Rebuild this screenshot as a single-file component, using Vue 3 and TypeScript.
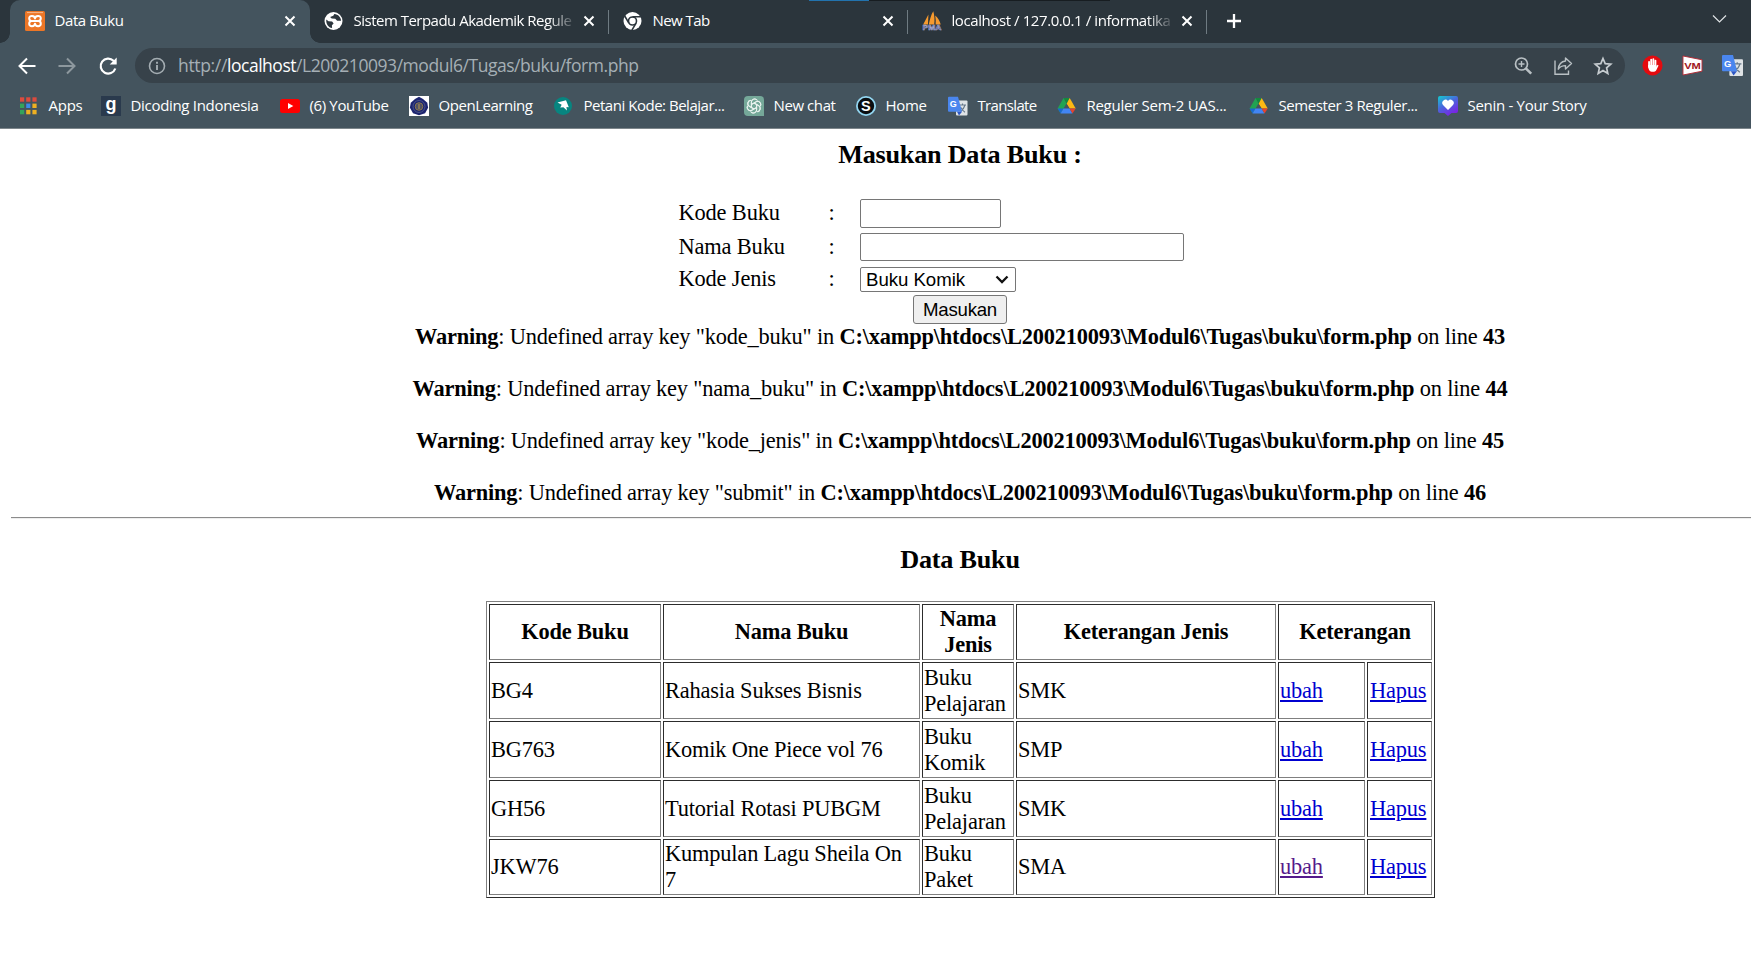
<script setup lang="ts">
import type { Directive } from 'vue'

interface Tab { icon: string; title: string; width: number; active?: boolean; fade?: boolean }
interface Bookmark { icon: string; label: string; width: number }
interface Warning { key: string; line: number; width: number }
interface Book { code: string; name: string; kind: string; level: string; visited?: boolean }

// Tracks a run of text so that it fills the given width in pixels.
const vFit: Directive<HTMLElement, number> = {
  mounted(el, { value }) {
    const natural = el.getBoundingClientRect().width
    const count = (el.textContent ?? '').trim().length
    if (value && count) el.style.letterSpacing = `${(value - natural) / count}px`
  },
}

const tabs: Tab[] = [
  { icon: 'xampp', title: 'Data Buku', width: 69, active: true },
  { icon: 'globe', title: 'Sistem Terpadu Akademik Regule', width: 218, fade: true },
  { icon: 'chrome', title: 'New Tab', width: 57 },
  { icon: 'pma', title: 'localhost / 127.0.0.1 / informatika', width: 219, fade: true },
]

const bookmarks: Bookmark[] = [
  { icon: 'apps', label: 'Apps', width: 34 },
  { icon: 'dicoding', label: 'Dicoding Indonesia', width: 128 },
  { icon: 'youtube', label: '(6) YouTube', width: 79 },
  { icon: 'emblem', label: 'OpenLearning', width: 94 },
  { icon: 'petani', label: 'Petani Kode: Belajar...', width: 141 },
  { icon: 'chat', label: 'New chat', width: 62 },
  { icon: 'home', label: 'Home', width: 41 },
  { icon: 'translate', label: 'Translate', width: 59 },
  { icon: 'drive', label: 'Reguler Sem-2 UAS...', width: 140 },
  { icon: 'drive', label: 'Semester 3 Reguler...', width: 139 },
  { icon: 'heart', label: 'Senin - Your Story', width: 119 },
]

const warnings: Warning[] = [
  { key: 'kode_buku', line: 43, width: 1090 },
  { key: 'nama_buku', line: 44, width: 1095 },
  { key: 'kode_jenis', line: 45, width: 1088 },
  { key: 'submit', line: 46, width: 1052 },
]

const books: Book[] = [
  { code: 'BG4', name: 'Rahasia Sukses Bisnis', kind: 'Buku Pelajaran', level: 'SMK' },
  { code: 'BG763', name: 'Komik One Piece vol 76', kind: 'Buku Komik', level: 'SMP' },
  { code: 'GH56', name: 'Tutorial Rotasi PUBGM', kind: 'Buku Pelajaran', level: 'SMK' },
  { code: 'JKW76', name: 'Kumpulan Lagu Sheila On 7', kind: 'Buku Paket', level: 'SMA', visited: true },
]

const appColors = ['#dc4b3e', '#dc4b3e', '#dc4b3e', '#35a35a', '#3b8bea', '#eeb022', '#35a35a', '#eeb022', '#eeb022']
</script>

<template>
  <div class="window">
    <header class="browser">
      <div class="tabstrip">
        <div class="edge"></div>
        <div v-for="t in tabs" :key="t.title" class="tab" :class="{ active: t.active, fade: t.fade }">
          <svg class="fav" viewBox="0 0 20 20">
            <g v-if="t.icon === 'xampp'">
              <rect width="20" height="20" rx="1.5" fill="#ed7626" />
              <path d="M2 1.6h16" stroke="#f7b98d" stroke-width="1" />
              <path d="M7.600 10h4.800M10 7.400C9.600 3.900 4 4.200 4.200 7.400 4.300 9.200 5.500 10 6.600 10 5.500 10 4.200 10.800 4.200 12.700 4 16 9.600 16.200 10 12.700M10 7.400C10.400 3.900 16 4.200 15.800 7.400 15.700 9.200 14.500 10 13.400 10 14.500 10 15.800 10.800 15.800 12.700 16 16 10.400 16.200 10 12.700" fill="none" stroke="#fff" stroke-width="2" stroke-linecap="round" stroke-linejoin="round" />
            </g>
            <g v-else-if="t.icon === 'globe'">
              <circle cx="9.5" cy="10" r="9" fill="#fff" />
              <path d="M2.3 8.5l2.2 1.7 3.6.2 1.5 2.2-1.7 1.7.2 2.8c-3.7-.6-6.3-4-5.8-8.6zM10.3 3l-1 1.7-3.2 1.2 1.6 1.6 3.6.2 1.8 2h4c-.2-3.5-2.8-6.3-6.8-6.7z" fill="#2c363d" />
            </g>
            <g v-else-if="t.icon === 'chrome'">
              <circle cx="9.5" cy="10" r="9" fill="#fff" />
              <circle cx="9.5" cy="10" r="4" fill="none" stroke="#2c363d" stroke-width="1.6" />
              <path d="M9.5 5.8h8.3M5.9 12.1L1.7 5M13.1 12.1l-4.2 7" stroke="#2c363d" stroke-width="1.6" />
            </g>
            <g v-else>
              <path d="M1.200 13.500L6.400 3.500 6 13.500zM6.800 13.500C8 8 9 4 11.300.3 12.600 5 12.800 9 12.200 13.500zM13.600 13.500c.3-3 .2-6-.4-9 2.500 2 4.800 5.500 5.500 9z" fill="#f79a2e" />
              <text x=".5" y="19.200" class="pma" textLength="19" lengthAdjust="spacingAndGlyphs">PMA</text>
            </g>
          </svg>
          <div class="title"><span v-fit="t.width">{{ t.title }}</span></div>
          <svg class="close" viewBox="0 0 12 12"><path d="M1.500 1.500l9 9M10.500 1.500l-9 9" stroke="#fff" stroke-width="2" /></svg>
        </div>
        <svg class="plus" viewBox="0 0 16 16"><path d="M8 1v14M1 8h14" stroke="#fff" stroke-width="2.300" /></svg>
        <svg class="chevron" viewBox="0 0 15 10"><path d="M1 1.500l6.500 6.500L14 1.500" fill="none" stroke="#dfe3e5" stroke-width="1.200" /></svg>
        <div class="progress"></div>
      </div>

      <div class="toolbar">
        <svg class="nav" viewBox="0 0 20 20"><path d="M18.500 10H3M10 2.500L2.500 10l7.500 7.500" fill="none" stroke="#fff" stroke-width="2" /></svg>
        <svg class="nav" viewBox="0 0 20 20"><path d="M1.500 10H17M10 2.500l7.500 7.500-7.500 7.500" fill="none" stroke="#8d989e" stroke-width="2" /></svg>
        <svg class="nav" viewBox="0 0 20 20">
          <path d="M17.300 12.500A7.500 7.500 0 1 1 15.500 4.800l2 2.200" fill="none" stroke="#fff" stroke-width="2.200" />
          <path d="M18.700 1.500v7h-7z" fill="#fff" />
        </svg>
        <div class="address">
          <svg class="info" viewBox="0 0 18 18">
            <circle cx="9" cy="9" r="7.500" fill="none" stroke="#a4adb2" stroke-width="1.600" />
            <path d="M9 8v5M9 4.800v1.900" stroke="#a4adb2" stroke-width="1.900" />
          </svg>
          <div class="url"><span v-fit="49">http://</span><span v-fit="69" class="host">localhost</span><span v-fit="342.5">/L200210093/modul6/Tugas/buku/form.php</span></div>
          <svg class="action" viewBox="0 0 20 20">
            <circle cx="8.500" cy="8" r="6" fill="none" stroke="#b9c0c4" stroke-width="1.700" />
            <path d="M8.500 5v6M5.500 8h6" stroke="#b9c0c4" stroke-width="1.400" />
            <path d="M12.800 12.300l5.400 5.400" stroke="#b9c0c4" stroke-width="2.600" />
          </svg>
          <svg class="action" viewBox="0 0 20 20">
            <path d="M2 4.500V18.300H15.500V14.500" fill="none" stroke="#b9c0c4" stroke-width="1.400" />
            <path d="M12.500 2l6 5.500-6 5.500v-3.400c-3.200 0-5.500 1-7.200 3.600.4-4.500 3-7.700 7.200-8.200z" fill="none" stroke="#b9c0c4" stroke-width="1.400" stroke-linejoin="round" />
          </svg>
          <svg class="action" viewBox="0 0 20 20">
            <path d="M10 2.500l2.200 5.200 5.600.5-4.200 3.700 1.200 5.500-4.800-2.900-4.800 2.900 1.200-5.500-4.200-3.700 5.600-.5z" fill="none" stroke="#c6ccd0" stroke-width="1.700" />
          </svg>
        </div>
        <svg class="ext" viewBox="0 0 22 22">
          <circle cx="11" cy="11" r="10.500" fill="#e40b0f" />
          <path d="M7.400 12.500V7.200M9.600 11V4.800M11.900 11V4.300M14.100 11.500V5.800" stroke="#fff" stroke-width="1.900" stroke-linecap="round" />
          <path d="M6.450 10.500h8.600v1.700l1.200-2 1.100.8-2.300 4.600c-.8 1.500-2 2-3.700 2-3.300 0-4.900-2.200-4.900-6.600z" fill="#fff" />
        </svg>
        <svg class="ext" viewBox="0 0 22 22">
          <path d="M1 1l20 4v12L1 21z" fill="#fff" stroke="#b32a34" stroke-width="1" />
          <text x="2.300" y="14.800" class="vm" textLength="17.500" lengthAdjust="spacingAndGlyphs">VM</text>
        </svg>
        <svg class="ext" viewBox="0 0 20 20">
          <rect x="7" y="4" width="13" height="16" rx="1" fill="#dfe3e6" />
          <path d="M10.500 8.500h8M14.500 7v1.500M17 8.500c-.8 3.500-3 5.500-5 6.800M12 10.500c1 2.500 3 4.500 5 6" fill="none" stroke="#66788a" stroke-width="1.200" />
          <path d="M1 0h9.500l3.800 15.500H1a1 1 0 0 1-1-1V1a1 1 0 0 1 1-1z" fill="#4a86ee" />
          <path d="M8.500 15.500h5.800L11 19.500z" fill="#2c56c4" />
          <text x="2" y="11" class="gee">G</text>
        </svg>
      </div>

      <nav class="bookmarks">
        <div v-for="b in bookmarks" :key="b.label" class="bookmark">
          <svg class="bicon" viewBox="0 0 20 20">
            <g v-if="b.icon === 'apps'">
              <rect v-for="(c, i) in appColors" :key="i" :x="1 + (i % 3) * 6.200" :y="1.300 + Math.floor(i / 3) * 6.300" width="4.200" height="4.400" :fill="c" />
            </g>
            <g v-else-if="b.icon === 'dicoding'">
              <rect width="20" height="20" fill="#2a3a4d" />
              <text x="4.500" y="14.200" class="nine">g</text>
            </g>
            <g v-else-if="b.icon === 'youtube'">
              <rect y="3" width="20" height="14" rx="2.500" fill="#f00" />
              <path d="M8 7l5.300 3L8 13z" fill="#fff" />
            </g>
            <g v-else-if="b.icon === 'emblem'">
              <rect width="20" height="20" fill="#fff" />
              <path d="M10 .8l4 2.200 4.300 3.800.8 5-3 5.400-6.100 2-6-2-3.100-5.400.9-5L6 3z" fill="#1c2470" />
              <circle cx="10" cy="10.500" r="6" fill="none" stroke="#4a5488" stroke-width="1" />
              <circle cx="10" cy="10.500" r="3.800" fill="#4e5065" stroke="#8a774e" stroke-width="1" />
              <path d="M10 8v5" stroke="#a58c52" stroke-width="1.200" />
            </g>
            <g v-else-if="b.icon === 'petani'">
              <circle cx="9" cy="10" r="9" fill="#078580" />
              <path d="M3.500 6.500L12 4.300l2.800 7-2.400-.4.600 3.500-3.600-3.200-3.200.2 1.500-2.600z" fill="#fff" />
            </g>
            <g v-else-if="b.icon === 'chat'">
              <path d="M4 0h12a4 4 0 0 1 4 4v16H4a4 4 0 0 1-4-4V4a4 4 0 0 1 4-4z" fill="#75a899" />
              <g fill="none" stroke="#eaf3f0" stroke-width="1">
                <path v-for="a in 6" :key="a" d="M7.400 11.500V6.200c0-3.400 4.400-4.400 6-1.700M7.400 8.500l4.600-2.700c2.900-1.600 5.700 1.500 4.500 4.100" :transform="`rotate(${a * 60} 10 10)`" />
              </g>
            </g>
            <g v-else-if="b.icon === 'home'">
              <circle cx="10" cy="10" r="9.100" fill="#0a0d10" stroke="#92d5f0" stroke-width="1.800" />
              <text x="5" y="15.200" class="ess">S</text>
            </g>
            <g v-else-if="b.icon === 'translate'">
              <rect x="8" y="4.500" width="11.500" height="15" rx="1" fill="#dfe3e6" />
              <path d="M11 9h7M14.500 7.500V9M17 9c-.8 3.200-2.500 5-4.500 6.200M12.500 11c1 2 2.500 4 4.500 5.300" fill="none" stroke="#66788a" stroke-width="1.100" />
              <path d="M1 .8h9l4 15H1a1 1 0 0 1-1-1v-13a1 1 0 0 1 1-1z" fill="#4a86ee" />
              <path d="M9 15.800h5L11 19.500z" fill="#2c56c4" />
              <text x="1.800" y="11.200" class="gee">G</text>
            </g>
            <g v-else-if="b.icon === 'drive'">
              <path d="M6.500 2h6.200L9.600 7.800z" fill="#128a3d" />
              <path d="M12.700 2l6 10.400h-6.100L9.600 7.800z" fill="#fdb913" />
              <path d="M9.600 7.800L3.600 17.500.6 12.400 6.500 2z" fill="#21a352" />
              <path d="M9.600 7.800l3 4.600H6.500z" fill="#44545e" />
              <path d="M.6 12.400h5.900l-2.900 5.100z" fill="#1967d2" />
              <path d="M6.500 12.400h6.100l2.900 5.100H3.600z" fill="#4285f4" />
              <path d="M12.600 12.400h6.100l-3.200 5.100z" fill="#e5432f" />
            </g>
            <g v-else>
              <defs>
                <linearGradient id="story" x1="0" y1="0" x2=".6" y2="1">
                  <stop offset="0" stop-color="#12cdd0" />
                  <stop offset=".5" stop-color="#4a66dc" />
                  <stop offset="1" stop-color="#7a22e4" />
                </linearGradient>
              </defs>
              <path d="M2 0h16a2 2 0 0 1 2 2v13a2 2 0 0 1-2 2h-4.500L10 20l-3.500-3H2a2 2 0 0 1-2-2V2a2 2 0 0 1 2-2z" fill="url(#story)" />
              <path d="M10 14L5 9a3 3 0 0 1 5-4 3 3 0 0 1 5 4z" fill="#fff" />
            </g>
          </svg>
          <span v-fit="b.width">{{ b.label }}</span>
        </div>
      </nav>
    </header>

    <main class="page">
      <h3><span v-fit="243.5">Masukan Data Buku :</span></h3>
      <form class="form" @submit.prevent>
        <div class="row first"><label>Kode Buku</label><span>:</span><input class="short" type="text"></div>
        <div class="row"><label>Nama Buku</label><span>:</span><input class="long" type="text"></div>
        <div class="row last">
          <label>Kode Jenis</label><span>:</span>
          <div class="select">
            <span v-fit="97.5">Buku Komik</span>
            <svg viewBox="0 0 14 9"><path d="M1.500 1.500L7 7l5.500-5.500" fill="none" stroke="#111" stroke-width="2.300" /></svg>
          </div>
        </div>
        <button type="submit"><span v-fit="74">Masukan</span></button>
      </form>

      <div class="warnings">
        <p v-for="w in warnings" :key="w.key">
          <span v-fit="w.width"><b>Warning</b>: Undefined array key "{{ w.key }}" in <b>C:\xampp\htdocs\L200210093\Modul6\Tugas\buku\form.php</b> on line <b>{{ w.line }}</b></span>
        </p>
      </div>
      <hr>

      <h3 class="second"><span v-fit="119.5">Data Buku</span></h3>
      <table>
        <colgroup>
          <col class="c1"><col class="c2"><col class="c3"><col class="c4"><col class="c5"><col class="c6">
        </colgroup>
        <tbody>
          <tr>
            <th>Kode Buku</th><th>Nama Buku</th><th>Nama Jenis</th><th>Keterangan Jenis</th><th colspan="2">Keterangan</th>
          </tr>
          <tr v-for="b in books" :key="b.code">
            <td>{{ b.code }}</td><td>{{ b.name }}</td><td>{{ b.kind }}</td><td>{{ b.level }}</td>
            <td><a href="#" :class="{ visited: b.visited }">ubah</a></td>
            <td class="del"><a href="#">Hapus</a></td>
          </tr>
        </tbody>
      </table>
    </main>
  </div>
</template>

<style>
html, body { margin: 0; background: #fff; overflow: hidden; }
</style>

<style scoped>
.window { width: 1751px; height: 967px; overflow: hidden; background: #fff; }
.browser { height: 129px; box-sizing: border-box; background: #44545e; border-bottom: 1px solid #7d868b; color: #fff; font: 15px/20px "Open Sans", "Noto Sans", sans-serif; overflow: hidden; }
.browser span { display: inline-block; white-space: pre; }
svg { display: block; flex: none; }
svg text { font-family: "Liberation Sans", sans-serif; font-weight: bold; }

.tabstrip { position: relative; display: flex; height: 43px; background: #2b353c; }
.edge { width: 10px; background: radial-gradient(circle at 0 0, transparent 9.500px, #44545e 10px) left bottom / 10px 10px no-repeat; }
.tab { position: relative; display: flex; align-items: center; width: 299px; height: 42px; box-sizing: border-box; padding-left: 14.500px; }
.tab.active { width: 299.500px; height: 43px; padding-left: 15px; padding-bottom: 1px; background: #44545e; border-radius: 10px 10px 0 0; }
.tab.active::before { content: ""; position: absolute; right: -10px; bottom: 0; width: 10px; height: 10px; background: radial-gradient(circle at 100% 0, transparent 9.500px, #44545e 10px); }
.tab:not(.active)::after { content: ""; position: absolute; right: 0; top: 10px; width: 1px; height: 24px; background: #6f7b82; }
.fav { width: 20px; height: 20px; }
.title { flex: 1; margin-left: 9.500px; overflow: hidden; height: 22px; line-height: 20px; }
.title span { vertical-align: top; }
.fade .title { -webkit-mask-image: linear-gradient(90deg, #000 88%, transparent 101%); mask-image: linear-gradient(90deg, #000 88%, transparent 101%); }
.fade .title { margin-right: -2px; }
.close { width: 12px; height: 12px; margin: 0 14px 0 10px; }
.plus { width: 16px; height: 16px; margin: 13px 0 0 19px; }
.chevron { width: 15px; height: 10px; margin: 14px 24px 0 auto; }
.progress { position: absolute; left: 809px; top: 0; width: 301px; height: 1px; background: linear-gradient(90deg, #2273ae 60px, #171d21 60px); }

.toolbar { display: flex; align-items: center; height: 45px; }
.nav { width: 20px; height: 20px; margin: 0 3px 0 17px; }
.nav + .nav { margin-left: 17px; }
.nav:nth-child(3) { margin: 0 17px 0 18px; }
.address { display: flex; align-items: center; width: 1490px; height: 35px; box-sizing: border-box; border-radius: 18px; background: #37424a; padding: 0 12.500px 0 13px; flex: none; }
.info { width: 18px; height: 18px; }
.url { flex: 1; margin-left: 12px; font-size: 17.500px; line-height: 22px; height: 24px; color: #a5afb5; white-space: nowrap; }
.host { color: #fff; }
.action { width: 20px; height: 20px; margin-left: 20px; }
.ext { width: 21px; height: 21px; margin-left: 19px; }
.address + .ext { margin-left: 17px; }
.vm { font-size: 9px; fill: #a01722; }
.gee { font-size: 9px; fill: #fff; }
.nine { font-size: 18px; fill: #fff; }
.ess { font-size: 14.500px; fill: #fff; }
.pma { font-size: 8px; fill: #3d4080; stroke: #b9bbdc; stroke-width: .5px; }

.bookmarks { display: grid; grid-template-columns: 82px 179px 129px 145px 190px 112px 92px 109px 192px 189px 170px; padding-left: 19px; height: 36px; align-items: center; }
.bookmark { display: flex; align-items: center; gap: 9.500px; }
.bookmark span { height: 22px; line-height: 20px; }
.bicon { width: 20px; height: 20px; }

.page { width: 1898px; margin-left: 11px; font: 22.400px/26px "Liberation Serif", serif; color: #000; }
h3 { margin: 0; padding-top: 11px; height: 30px; font-size: 26.200px; line-height: 30px; text-align: center; }
h3 span, .warnings span { display: inline-block; white-space: nowrap; }
.form { display: flex; flex-direction: column; align-items: flex-start; width: 565px; height: 125px; margin: 29px 0 0 667.500px; letter-spacing: -.15px; }
.row { display: grid; grid-template-columns: 150px 31.500px auto; align-items: center; height: 28px; margin-bottom: 4px; }
.row.first { height: 29px; margin-bottom: 5px; line-height: 25px; }
.row.first label, .row.first > span { margin-bottom: 3px; }
.row.last { align-items: start; line-height: 25px; margin-bottom: 0; height: 28px; margin-top: 2px; }
.row.last label, .row.last > span { margin-top: -1px; }
input { box-sizing: border-box; height: 28px; padding: 0; border: 1px solid #767676; border-radius: 2px; background: #fff; }
.short { width: 141px; height: 29px; }
.long { width: 324px; }
.select { display: flex; align-items: center; justify-content: space-between; box-sizing: border-box; width: 156px; height: 25px; padding: 0 6px 0 5px; border: 1px solid #767676; border-radius: 2px; font: 18.670px/23px "Liberation Sans", sans-serif; }
.select svg { width: 14px; height: 9px; }
.select span, button span { display: inline-block; }
button { align-self: center; position: relative; left: -1px; box-sizing: border-box; width: 94px; height: 29px; margin: 0; padding: 0; border: 1px solid #767676; border-radius: 3px; background: #efefef; color: #000; font: 18.670px/26px "Liberation Sans", sans-serif; text-align: center; }
.warnings { display: grid; gap: 26px; }
.warnings p { margin: 0; height: 26px; text-align: center; }
hr { height: 1px; margin: 11px 0 0; border: 0; background: #8b8b8b; border-bottom: 1px solid #eee; }
h3.second { padding-top: 26px; }
table { width: 949px; height: 297px; margin: 26px 0 0 475px; table-layout: fixed; border-collapse: separate; border-spacing: 2px; border: 1px solid; border-color: #808080 #2c2c2c #2c2c2c #808080; box-sizing: border-box; letter-spacing: -.17px; }
.c1 { width: 172px; }
.c2 { width: 257px; }
.c3 { width: 92px; }
.c4 { width: 260px; }
.c5 { width: 87px; }
.c6 { width: 65px; }
th, td { height: 57px; box-sizing: border-box; padding: 1px; border: 1px solid; border-color: #2c2c2c #808080 #808080 #2c2c2c; vertical-align: middle; }
td { text-align: left; }
td.del { padding-left: 2px; }
tr:first-child th, tr:last-child td { height: 56px; }
a { color: #0000d0; text-decoration: underline; }
a.visited { color: #551a8b; }
</style>
